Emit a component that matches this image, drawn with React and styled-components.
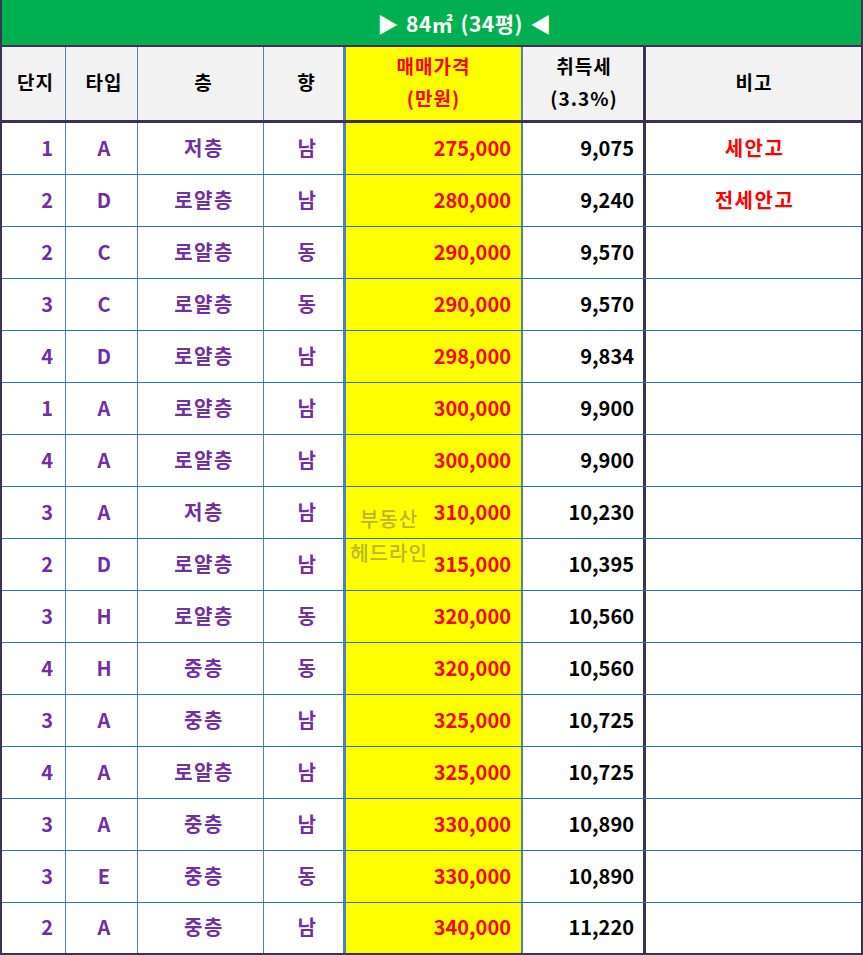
import React from "react";
import styled, { createGlobalStyle } from "styled-components";

const GlobalStyle = createGlobalStyle`
  html, body {
    margin: 0;
    padding: 0;
    background: #ffffff;
  }
  body {
    font-family: "Noto Sans CJK KR", "Noto Sans", sans-serif;
  }
`;

const colors = {
  green: "#00b050",
  dark: "#3f3151",
  blue: "#4f81bd",
  rowLine: "#2a72b8",
  purple: "#7030a0",
  red: "#ff0000",
  yellow: "#ffff00",
  headBg: "#f2f2f2",
};

const COLS = "64px 72px 126px 82px 177px 123px 1fr";

const rows = [
  ["1", "A", "저층", "남", "275,000", "9,075", "세안고"],
  ["2", "D", "로얄층", "남", "280,000", "9,240", "전세안고"],
  ["2", "C", "로얄층", "동", "290,000", "9,570", ""],
  ["3", "C", "로얄층", "동", "290,000", "9,570", ""],
  ["4", "D", "로얄층", "남", "298,000", "9,834", ""],
  ["1", "A", "로얄층", "남", "300,000", "9,900", ""],
  ["4", "A", "로얄층", "남", "300,000", "9,900", ""],
  ["3", "A", "저층", "남", "310,000", "10,230", ""],
  ["2", "D", "로얄층", "남", "315,000", "10,395", ""],
  ["3", "H", "로얄층", "동", "320,000", "10,560", ""],
  ["4", "H", "중층", "동", "320,000", "10,560", ""],
  ["3", "A", "중층", "남", "325,000", "10,725", ""],
  ["4", "A", "로얄층", "남", "325,000", "10,725", ""],
  ["3", "A", "중층", "남", "330,000", "10,890", ""],
  ["3", "E", "중층", "동", "330,000", "10,890", ""],
  ["2", "A", "중층", "남", "340,000", "11,220", ""],
];

const App = () => {
  return (
    <>
      <GlobalStyle />
      <Sheet>
        <TitleBar>▶ 84㎡ (34평) ◀</TitleBar>
        <HeadRow>
          <HeadCell $shift="4px">단지</HeadCell>
          <HeadCell $shift="5px">타입</HeadCell>
          <HeadCell $shift="6px">층</HeadCell>
          <HeadCell $thick $shift="6px">향</HeadCell>
          <HeadCell $price>
            매매가격
            <br />
            (만원)
          </HeadCell>
          <HeadCell $dark $shift="2px">
            취득세
            <br />
            (3.3%)
          </HeadCell>
          <HeadCell $last $shift="1px">비고</HeadCell>
        </HeadRow>
        <Body>
          {rows.map((r, i) => (
            <Row key={i} $last={i === rows.length - 1}>
              <Cell $align="right" $pad="12px">{r[0]}</Cell>
              <Cell $shift="5px">{r[1]}</Cell>
              <Cell $hangul $shift="7px">{r[2]}</Cell>
              <Cell $thick $hangul $shift="8px">{r[3]}</Cell>
              <Cell $price $align="right" $pad="10px">{r[4]}</Cell>
              <Cell $dark $tone="#000" $align="right" $pad="9px">{r[5]}</Cell>
              <Cell $last $hangul $shift="2px" $tone={colors.red}>{r[6]}</Cell>
            </Row>
          ))}
          <Watermark>
            <span>부동산</span>
            <span>헤드라인</span>
          </Watermark>
        </Body>
      </Sheet>
    </>
  );
};

const Sheet = styled.div`
  width: 863px;
  box-sizing: border-box;
  border-left: 2px solid ${colors.dark};
  border-right: 2px solid ${colors.dark};
  border-bottom: 2px solid ${colors.dark};
`;

const TitleBar = styled.div`
  height: 45px;
  background: ${colors.green};
  color: #ffffff;
  font-weight: 700;
  font-size: 21px;
  letter-spacing: 0.5px;
  word-spacing: 2px;
  display: flex;
  align-items: center;
  justify-content: center;
  border-bottom: 2px solid ${colors.dark};
  padding-left: 66px;
`;

const HeadRow = styled.div`
  display: grid;
  grid-template-columns: ${COLS};
  height: 76px;
  border-bottom: 3px solid ${colors.dark};
  box-sizing: border-box;
`;

const borderRight = ({ $thick, $price, $dark, $last }) => {
  if ($last) return "none";
  if ($thick) return `3px solid ${colors.blue}`;
  if ($price) return `2px solid ${colors.blue}`;
  if ($dark) return `3px solid ${colors.dark}`;
  return `1px solid ${colors.blue}`;
};

const HeadCell = styled.div`
  background: ${(p) => (p.$price ? colors.yellow : colors.headBg)};
  color: ${(p) => (p.$price ? colors.red : "#000")};
  border-right: ${borderRight};
  font-weight: 700;
  font-size: 19px;
  letter-spacing: 1px;
  line-height: 32px;
  text-align: center;
  display: flex;
  align-items: center;
  justify-content: center;
  padding-left: ${(p) => p.$shift || "0"};
  padding-bottom: 4px;
`;

const Body = styled.div`
  position: relative;
`;

const Row = styled.div`
  display: grid;
  grid-template-columns: ${COLS};
  height: ${(p) => (p.$last ? "50px" : "52px")};
  box-sizing: border-box;
  border-bottom: ${(p) => (p.$last ? "none" : `1px solid ${colors.rowLine}`)};
`;

const Cell = styled.div`
  background: ${(p) => (p.$price ? colors.yellow : "#fff")};
  color: ${(p) => (p.$price ? colors.red : p.$tone || colors.purple)};
  border-right: ${borderRight};
  font-weight: 700;
  font-size: 20px;
  letter-spacing: ${(p) => (p.$hangul ? "1.5px" : "0")};
  display: flex;
  align-items: center;
  justify-content: ${(p) => (p.$align === "right" ? "flex-end" : "center")};
  padding-right: ${(p) => p.$pad || "0"};
  padding-left: ${(p) => p.$shift || "0"};
  padding-bottom: 3px;
`;

const Watermark = styled.div`
  position: absolute;
  left: 345px;
  width: 84px;
  top: 379px;
  display: flex;
  flex-direction: column;
  align-items: center;
  font-size: 20px;
  font-weight: 500;
  letter-spacing: 1px;
  color: #bdb52e;
  line-height: 34px;
  pointer-events: none;
`;

export default App;
